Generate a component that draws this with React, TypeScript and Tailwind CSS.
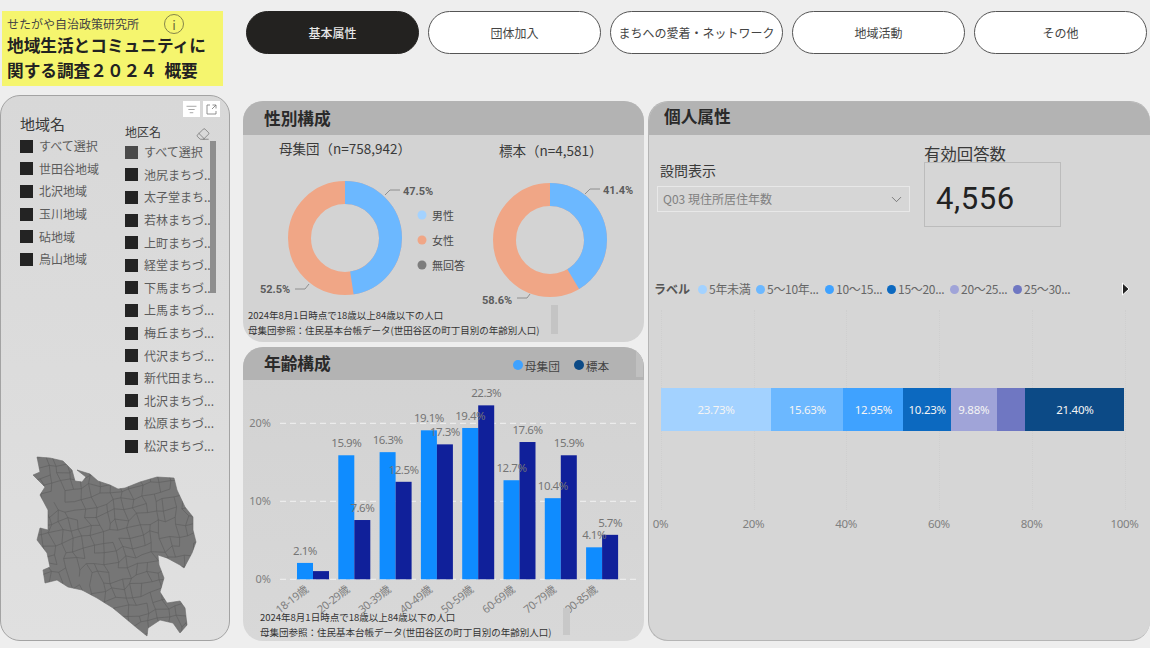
import { ChevronDown, Eraser, ListFilter } from 'lucide-react'

const jp = '"Noto Sans CJK JP"'
const tabs = ['基本属性', '団体加入', 'まちへの愛着・ネットワーク', '地域活動', 'その他']
const areas = ['すべて選択', '世田谷地域', '北沢地域', '玉川地域', '砧地域', '烏山地域']
const districts = [
  '池尻まちづ...',
  '太子堂まち...',
  '若林まちづ...',
  '上町まちづ...',
  '経堂まちづ...',
  '下馬まちづ...',
  '上馬まちづ...',
  '梅丘まちづ...',
  '代沢まちづ...',
  '新代田まち...',
  '北沢まちづ...',
  '松原まちづ...',
  '松沢まちづ...',
]
const ages = [
  { name: '18-19歳', a: 2.1, b: 1.05, showB: false },
  { name: '20-29歳', a: 15.9, b: 7.6, showB: true },
  { name: '30-39歳', a: 16.3, b: 12.5, showB: true },
  { name: '40-49歳', a: 19.1, b: 17.3, showB: true },
  { name: '50-59歳', a: 19.4, b: 22.3, showB: true },
  { name: '60-69歳', a: 12.7, b: 17.6, showB: true },
  { name: '70-79歳', a: 10.4, b: 15.9, showB: true },
  { name: '90-85歳', a: 4.1, b: 5.7, showB: true },
]
const stack = [
  { w: 23.73, c: '#a3d2ff', label: '23.73%' },
  { w: 15.63, c: '#6cb8ff', label: '15.63%' },
  { w: 12.95, c: '#3fa2ff', label: '12.95%' },
  { w: 10.23, c: '#0c69c0', label: '10.23%' },
  { w: 9.88, c: '#a0a4d8', label: '9.88%' },
  { w: 6.18, c: '#6f77c2', label: '' },
  { w: 21.4, c: '#0c4a86', label: '21.40%' },
]
const legend = [
  { c: '#a3d2ff', t: '5年未満', w: 'w-[58px]' },
  { c: '#6cb8ff', t: '5〜10年...', w: 'w-[69px]' },
  { c: '#3fa2ff', t: '10〜15...', w: 'w-[62px]' },
  { c: '#0c69c0', t: '15〜20...', w: 'w-[63px]' },
  { c: '#a0a4d8', t: '20〜25...', w: 'w-[63px]' },
  { c: '#6f77c2', t: '25〜30...', w: 'w-[63px]' },
]

const outline =
  'M37 457 L50 458 L63 461 L72 470 L75 481 L82 482 L86 477 L77 470 L90 474 L98 481 L110 485 L118 489 L125 488 L140 482 L157 477 L174 478 L177 490 L185 507 L193 517 L193 530 L196 542 L192 553 L184 568 L180 565 L167 558 L158 555 L159 565 L164 578 L160 592 L167 603 L180 601 L185 608 L187 625 L180 633 L173 623 L160 620 L148 628 L147 636 L137 628 L113 608 L97 598 L82 590 L68 587 L57 580 L45 583 L43 570 L50 567 L47 553 L37 540 L40 528 L48 530 L48 510 L40 495 L45 487 L33 475 L40 472 Z'

// wards are only texture at this size, so a jittered grid clipped to the outline will do
function wardLines() {
  let seed = 23
  const rnd = () => {
    seed = (seed * 16807) % 2147483647
    return seed / 2147483647 - 0.5
  }
  const n = 26
  const pts: [number, number][][] = []
  for (let i = 0; i < n; i++) {
    pts.push([])
    for (let j = 0; j < n; j++) {
      const x = 0 + i * 9.5 + (j - 13) * 2 + rnd() * 6
      const y = 425 + j * 9.5 - (i - 13) * 2 + rnd() * 6
      pts[i].push([x, y])
    }
  }
  let d = ''
  for (let i = 0; i < n; i++) {
    for (let j = 0; j < n; j++) {
      const [x, y] = pts[i][j]
      if (i < n - 1 && rnd() > -0.36) d += `M${x.toFixed(1)} ${y.toFixed(1)}L${pts[i + 1][j][0].toFixed(1)} ${pts[i + 1][j][1].toFixed(1)}`
      if (j < n - 1 && rnd() > -0.36) d += `M${x.toFixed(1)} ${y.toFixed(1)}L${pts[i][j + 1][0].toFixed(1)} ${pts[i][j + 1][1].toFixed(1)}`
    }
  }
  return d
}

function Slicer({ label, tone }: { label: string; tone?: string }) {
  return (
    <div className="flex h-[22.6px] items-center">
      <span className={`h-[13px] w-[13px] shrink-0 ${tone ?? 'bg-[#232323]'}`} />
      <span className="ml-[6px] whitespace-nowrap text-[12px] leading-[16px] text-[#5c5c5c]">{label}</span>
    </div>
  )
}

function Header({ title, className, children }: { title: string; className: string; children?: React.ReactNode }) {
  return <div className={`flex shrink-0 items-center bg-[#b3b3b3] text-[16.7px] font-bold text-[#2a2a2a] ${className}`}>{title}{children}</div>
}

function Donut({ cx, cy, pct }: { cx: number; cy: number; pct: number }) {
  const r = 45.5
  const c = 2 * Math.PI * r
  return (
    <g>
      <circle cx={cx} cy={cy} r={r} fill="none" stroke="#f0a686" strokeWidth="23" />
      <circle
        cx={cx}
        cy={cy}
        r={r}
        fill="none"
        stroke="#6cb8ff"
        strokeWidth="23"
        strokeDasharray={`${(c * pct) / 100} ${c}`}
        transform={`rotate(-90 ${cx} ${cy})`}
      />
    </g>
  )
}

function GenderChart() {
  return (
    <svg viewBox="243 165 401 140" className="block h-[140px] w-[401px] overflow-visible" style={{ fontFamily: `"Roboto", ${jp}, sans-serif` }}>
      <Donut cx={345} cy={238} pct={47.5} />
      <Donut cx={550} cy={240} pct={41.4} />
      <g fill="none" stroke="#7d7d7d" strokeWidth="0.8">
        <path d="M385 195 L390 190 L400 190" />
        <path d="M585 194 L590 189 L600 189" />
        <path d="M295 289 L305 289 L309 284" />
        <path d="M517 298 L527 298 L530 294" />
      </g>
      <g fontSize="11" fontWeight="700" fill="#5c5c5c">
        <text x="403" y="195">47.5%</text>
        <text x="603" y="194">41.4%</text>
        <text x="260" y="293">52.5%</text>
        <text x="482" y="304">58.6%</text>
      </g>
      <circle cx="422" cy="215" r="4.5" fill="#a3d2ff" />
      <circle cx="422" cy="240" r="4.5" fill="#f0a686" />
      <circle cx="422" cy="265" r="4.5" fill="#7d7d7d" />
      <g fontSize="11" fill="#4a4a4a" style={{ fontFamily: `${jp}, sans-serif` }}>
        <text x="432" y="220">男性</text>
        <text x="432" y="245">女性</text>
        <text x="432" y="270">無回答</text>
      </g>
    </svg>
  )
}

function AgeChart() {
  const y0 = 579.3
  const scale = 7.8
  return (
    <svg viewBox="243 380 401 261" className="block h-[261px] w-[401px]" style={{ fontFamily: `"Noto Sans", ${jp}, sans-serif` }}>
      {[0, 10, 20].map((v) => (
        <g key={v}>
          <line x1="280" x2="640" y1={y0 - v * scale} y2={y0 - v * scale} stroke="#f2f2f2" strokeWidth="1" strokeDasharray="6 4" />
          <text x="271" y={y0 - v * scale + 4} textAnchor="end" fontSize="11" fill="#808080">
            {v}%
          </text>
        </g>
      ))}
      {ages.map((g, i) => {
        const x = 297 + i * 41.3
        return (
          <g key={g.name}>
            <rect x={x} y={y0 - g.a * scale} width="16" height={g.a * scale} fill="#0f8cff" />
            <rect x={x + 16} y={y0 - g.b * scale} width="16" height={g.b * scale} fill="#10209a" />
            <text x={x + 8} y={y0 - g.a * scale - 8} textAnchor="middle" fontSize="11.5" letterSpacing="-0.5" fill="#757575">
              {g.a}%
            </text>
            {g.showB && (
              <text x={x + 24} y={y0 - g.b * scale - 8} textAnchor="middle" fontSize="11.5" letterSpacing="-0.5" fill="#757575">
                {g.b}%
              </text>
            )}
            <text
              x={x + 12}
              y="591"
              textAnchor="end"
              fontSize="11"
              letterSpacing="-0.4"
              fill="#808080"
              transform={`rotate(-38 ${x + 12} 591)`}
            >
              {g.name}
            </text>
          </g>
        )
      })}
    </svg>
  )
}

export default function App() {
  const wards = wardLines()
  return (
    <div className="flex h-[648px] w-[1150px] gap-[13px] overflow-hidden bg-[#eeeeee]" style={{ fontFamily: `${jp}, sans-serif` }}>
      <div className="w-[230px] shrink-0 pt-[11px]">
        <div className="ml-[2px] h-[75px] w-[221px] bg-[#f5f56e] pl-[5px] pt-[4px] text-[#222]">
          <div className="flex h-[18px] items-center text-[12px] leading-none text-[#444]">
            せたがや自治政策研究所
            <span className="ml-[25px] flex h-[20px] w-[20px] items-center justify-center rounded-full border border-[#85854a] text-[13px] text-[#6f6f3a]">
              i
            </span>
          </div>
          <div className="text-[16.67px] font-bold leading-[25px]">
            地域生活とコミュニティに
            <br />
            関する調査２０２４&nbsp;&nbsp;概要
          </div>
        </div>
        <div className="relative mt-[9px] flex h-[546px] flex-col overflow-hidden rounded-[20px] border border-[#a3a3a3] bg-gradient-to-b from-[#d8d8d8] to-[#e0e0e0]">
          <div className="absolute left-[182px] top-[5px] flex gap-[3px]">
            <span className="flex h-[16px] w-[17px] items-center justify-center bg-white text-[#666]">
              <ListFilter size={11} strokeWidth={1.25} />
            </span>
            <span className="flex h-[16px] w-[17px] items-center justify-center bg-white">
              <svg width="11" height="11" viewBox="0 0 11 11" fill="none" stroke="#777" strokeWidth="0.8">
                <path d="M4 1H1V10H10V7" />
                <path d="M6.5 1H10V4.5M10 1L6 5" />
              </svg>
            </span>
          </div>
          <div className="flex h-[359px] shrink-0">
            <div className="ml-[19px] w-[105px] pt-[18px]">
              <div className="mb-[1px] text-[15px] leading-[20px] text-[#3a3a3a]">地域名</div>
              {areas.map((a) => (
                <Slicer key={a} label={a} />
              ))}
            </div>
            <div className="pt-[27px]">
              <div className="text-[12px] leading-[18px] text-[#3a3a3a]">地区名</div>
              <Slicer label="すべて選択" tone="bg-[#4a4a4a]" />
              {districts.map((d) => (
                <Slicer key={d} label={d} />
              ))}
            </div>
          </div>
          <Eraser size={14} strokeWidth={1} className="absolute left-[195px] top-[31px] text-[#555]" />
          <div className="absolute left-[209px] top-[45px] h-[152px] w-[6px] bg-[#8e8e8e]" />
          <svg viewBox="1 455 228 185" className="block h-[185px] w-[228px]">
            <clipPath id="ward-clip">
              <path d={outline} />
            </clipPath>
            <path d={outline} fill="#767676" stroke="#6a6a6a" strokeWidth="0.6" />
            <path d={wards} clipPath="url(#ward-clip)" fill="none" stroke="#606060" strokeWidth="0.7" />
          </svg>
        </div>
      </div>

      <div className="min-w-0 flex-1 pt-[11px]">
        <div className="ml-[3px] flex h-[43px] gap-[9px]">
          {tabs.map((t, i) => (
            <div
              key={t}
              className={`flex w-[173px] items-center justify-center rounded-[22px] border text-[12px] ${
                i === 0 ? 'border-[#232220] bg-[#232220] font-medium text-[#e8e8e8]' : 'border-[#555] bg-white text-[#444]'
              }`}
            >
              {t}
            </div>
          ))}
        </div>

        <div className="mt-[47px] flex gap-[4px]">
          <div className="flex w-[401px] flex-col gap-[5px]">
            <section className="flex h-[241px] flex-col overflow-hidden rounded-[20px] bg-[#d3d3d3]">
              <Header title="性別構成" className="h-[34px] pl-[21px] pt-[1px]" />
              <div className="flex h-[30px] shrink-0 items-center pb-[3px] text-[13.5px] text-[#3a3a3a]">
                <span className="ml-[36px] w-[220px]">母集団（n=758,942）</span>
                <span className="pt-[3px]">標本（n=4,581）</span>
              </div>
              <GenderChart />
              <div className="relative pl-[5px] pt-[3px] text-[9.5px] leading-[15px] text-[#333]">
                <div>2024年8月1日時点で18歳以上84歳以下の人口</div>
                <div>母集団参照：住民基本台帳データ(世田谷区の町丁目別の年齢別人口)</div>
                <span className="absolute left-[308px] top-[0px] h-[29px] w-[7px] bg-[#c4c4c4]" />
              </div>
            </section>

            <section className="relative flex h-[294px] flex-col overflow-hidden rounded-[20px] bg-gradient-to-b from-[#d2d2d2] to-[#d8d8d8]">
              <Header title="年齢構成" className="h-[33px] pl-[21px] pt-[1px]">
                <span className="ml-[182px] mt-[3px] flex items-center text-[11.7px] font-normal text-[#444]">
                  <span className="mr-[2px] h-[10px] w-[10px] rounded-full bg-[#3fa2ff]" />
                  母集団
                  <span className="ml-[14px] mr-[2px] h-[10px] w-[10px] rounded-full bg-[#0c4a86]" />
                  標本
                </span>
              </Header>
              <span className="absolute left-[393px] top-[3px] h-[27px] w-[7px] bg-[#c0c0c0]" />
              <AgeChart />
              <div className="absolute bottom-[1px] left-[17px] text-[9.5px] leading-[15px] text-[#333]">
                <div>2024年8月1日時点で18歳以上84歳以下の人口</div>
                <div>母集団参照：住民基本台帳データ(世田谷区の町丁目別の年齢別人口)</div>
              </div>
              <span className="absolute left-[320px] top-[261px] h-[27px] w-[7px] bg-[#c8c8c8]" />
            </section>
          </div>

          <section className="flex h-[540px] w-[502px] flex-col overflow-hidden rounded-[20px] border border-r-0 border-[#b5b5b5] bg-[#d6d6d6]">
            <Header title="個人属性" className="h-[33px] pb-[3px] pl-[15px]" />
            <div className="flex h-[92px] shrink-0 pl-[8px]">
              <div className="w-[253px] pt-[26px]">
                <div className="pl-[3px] text-[14px] leading-[18px] text-[#3a3a3a]">設問表示</div>
                <div className="mt-[7px] flex h-[26px] items-center justify-between border border-[#e8e8e8] pl-[5px] pr-[4px] text-[12px] text-[#808080]">
                  Q03 現住所居住年数
                  <ChevronDown size={17} strokeWidth={1} className="text-[#555]" />
                </div>
              </div>
              <div className="ml-[14px] w-[137px] pt-[9px]">
                <div className="h-[18px] text-[16.4px] leading-[18px] text-[#3a3a3a]">有効回答数</div>
                <div
                  className="flex h-[65px] items-center border border-[#bcbcbc] pl-[11px] pt-[10px] text-[31px] tracking-[0.6px] text-[#222]"
                  style={{ fontFamily: 'Roboto, sans-serif' }}
                >
                  4,556
                </div>
              </div>
            </div>
            <div className="mt-[52px] flex h-[20px] shrink-0 items-center pl-[5px] text-[12px] text-[#666]">
              <span className="mr-[8px] font-bold text-[#555]">ラベル</span>
              {legend.map((l) => (
                <span key={l.t} className={`flex items-center whitespace-nowrap ${l.w}`}>
                  <span className="mr-[2px] h-[9px] w-[9px] shrink-0 rounded-full" style={{ background: l.c }} />
                  <span className="tracking-[-0.3px]">{l.t}</span>
                </span>
              ))}
              <svg width="11" height="16" viewBox="0 0 11 16" className="ml-auto mr-[19px]">
                <path d="M2.5 2 L9 8 L2.5 14 Z" fill="#222" stroke="#fff" strokeWidth="1" />
              </svg>
            </div>
            <div className="relative ml-[12px] mt-[11px] grid h-[200px] w-[464.5px] grid-cols-5 border-r border-dotted border-[#cfcfcf]">
              {[0, 1, 2, 3, 4].map((i) => (
                <div key={i} className="border-l border-dotted border-[#cfcfcf]" />
              ))}
              <div className="absolute left-0 right-0 top-[78px] flex h-[43px]">
                {stack.map((s) => (
                  <div
                    key={s.c}
                    className="flex items-center justify-center text-[11.5px] tracking-[-0.3px] text-[#f4f4f4]"
                    style={{ width: `${s.w}%`, background: s.c, fontFamily: '"Noto Sans", sans-serif' }}
                  >
                    {s.label}
                  </div>
                ))}
              </div>
            </div>
            <div
              className="ml-[-5px] mt-[5px] flex w-[497px] justify-between text-[11.5px] tracking-[-0.3px] text-[#808080]"
              style={{ fontFamily: '"Noto Sans", sans-serif' }}
            >
              {['0%', '20%', '40%', '60%', '80%', '100%'].map((t) => (
                <span key={t} className="w-[33px] text-center">
                  {t}
                </span>
              ))}
            </div>
          </section>
        </div>
      </div>
    </div>
  )
}
